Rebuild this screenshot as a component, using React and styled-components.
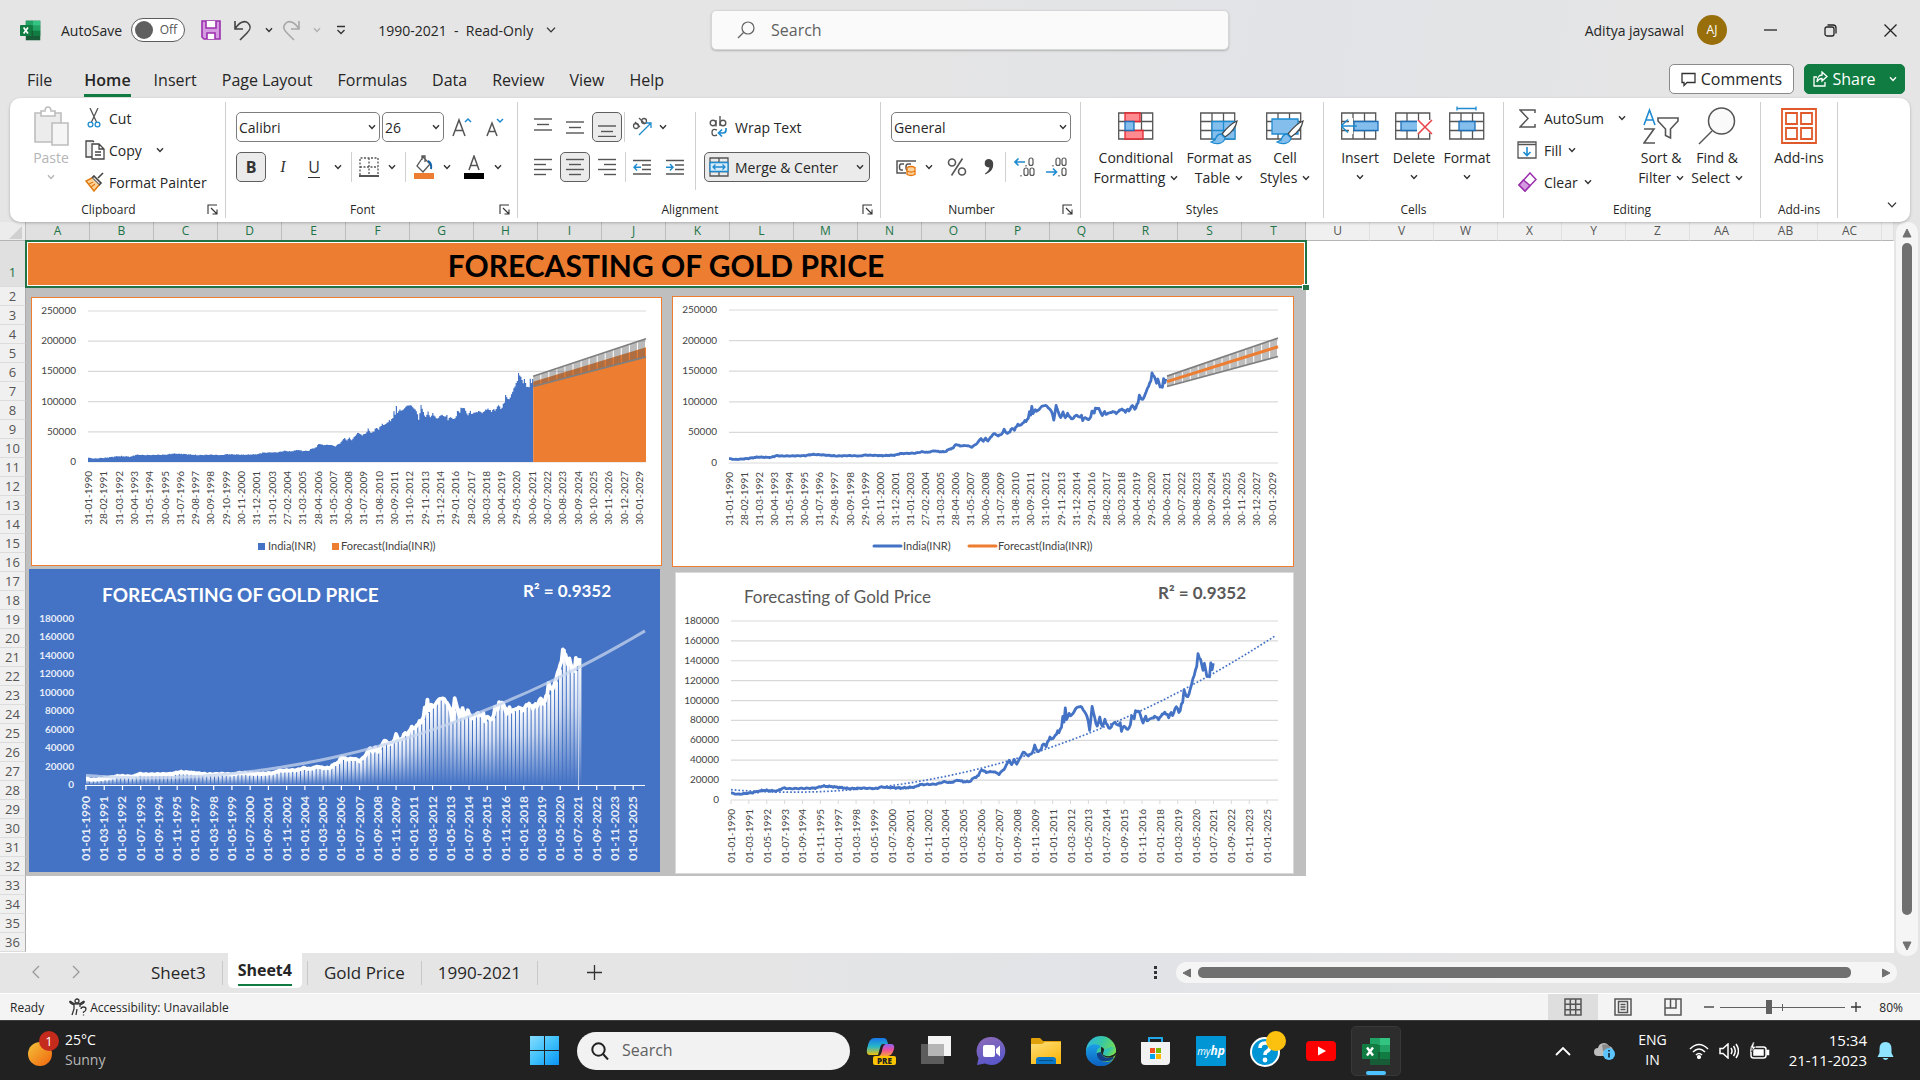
import React from "react";
import styled, { createGlobalStyle, css } from "styled-components";

const ui = '"Open Sans", "Noto Sans", sans-serif';
const cal = 'Lato, "Open Sans", sans-serif';
const GREEN = "#107c41";
const INK = "#262626";
const BLUE = "#4472c4";
const ORANGE = "#ed7d31";

const Global = createGlobalStyle`
  *, *::before, *::after { box-sizing: border-box; }
  html, body { margin: 0; height: 100%; overflow: hidden; }
  #root { height: 100%; }
  body { font-family: ${ui}; font-size: 14px; color: ${INK}; background: #e4e4e4; }
  button, input, select { font: inherit; color: inherit; margin: 0; }
  button { background: none; border: 0; padding: 0; cursor: pointer; }
  svg { display: block; flex: none; }
`;

const Screen = styled.div`
  height: 100vh;
  display: flex;
  flex-direction: column;
  background: linear-gradient(100deg, #e5e5e5 40%, #e2e3e7 62%, #e5e5e5 82%);
`;

/* ---------- title bar ---------- */
const TitleBar = styled.header`
  display: grid;
  grid-template-columns: minmax(0, 1fr) minmax(0, 518px) minmax(0, 691px);
  align-items: center;
  height: 60px;
`;
const TitleLeft = styled.div`
  display: flex;
  align-items: center;
  padding-left: 20px;
`;
const TitleRight = styled.div`
  display: flex;
  align-items: center;
  justify-content: flex-end;
  gap: 13px;
`;
const AutoSave = styled.label`
  display: flex;
  align-items: center;
  gap: 9px;
  margin: 0 16px 0 20px;
`;
const Toggle = styled.span`
  display: grid;
  width: 54px;
  height: 24px;
  border: 1px solid #5c5c5c;
  border-radius: 12px;
  background: #fff;
  font-size: 12px;
  line-height: 22px;
  > * { grid-area: 1 / 1; }
  > span { justify-self: end; padding-right: 7px; color: #555; pointer-events: none; }
  input {
    appearance: none;
    width: 18px;
    height: 18px;
    margin: 2px 3px;
    border-radius: 50%;
    background: #5f5f5f;
  }
`;
const QuickBtn = styled.button`
  display: grid;
  place-items: center;
  width: ${(p) => p.$w}px;
  height: 30px;
`;
const DocName = styled.button`
  display: flex;
  align-items: center;
  gap: 12px;
  margin-left: 13px;
  white-space: pre;
`;
const SearchBox = styled.label`
  display: flex;
  align-items: center;
  gap: 16px;
  height: 40px;
  padding: 0 25px;
  background: #fafafa;
  border: 1px solid #d6d6d6;
  border-radius: 5px;
  box-shadow: 0 1px 2px rgba(0, 0, 0, 0.22);
  input {
    flex: 1;
    min-width: 0;
    border: 0;
    background: none;
    outline: 0;
    padding: 0;
    font-size: 16px;
    line-height: 22px;
  }
  input::placeholder { color: #616161; opacity: 1; }
`;
const Avatar = styled.span`
  width: 30px;
  height: 30px;
  border-radius: 50%;
  background: #986f0b;
  color: #fff;
  font-size: 12px;
  line-height: 30px;
  text-align: center;
`;
const WinControls = styled.div`
  display: flex;
  button {
    display: grid;
    place-items: center;
    width: 60px;
    height: 40px;
  }
`;

/* ---------- menu tabs ---------- */
const MenuRow = styled.nav`
  display: flex;
  align-items: center;
  height: 38px;
  padding: 0 15px 0 27px;
`;
const MenuTab = styled.a`
  color: ${INK};
  text-decoration: none;
  font-size: 16px;
  line-height: 26px;
  padding: 5px 0 1px;
  margin-right: ${(p) => (p.$first ? 32 : p.$on ? 23 : 25)}px;
  border-bottom: 3px solid ${(p) => (p.$on ? GREEN : "transparent")};
  font-weight: ${(p) => (p.$on ? 600 : 400)};
`;
const MenuActions = styled.div`
  display: flex;
  gap: 10px;
  margin-left: auto;
`;
const ActionBtn = styled.button`
  display: flex;
  align-items: center;
  justify-content: center;
  gap: 5px;
  height: 30px;
  width: ${(p) => p.$w}px;
  font-size: 16px;
  border-radius: 5px;
  border: 1px solid ${(p) => (p.$solid ? GREEN : "#8a8a8a")};
  background: ${(p) => (p.$solid ? GREEN : "#fff")};
  color: ${(p) => (p.$solid ? "#fff" : INK)};
`;

/* ---------- ribbon ---------- */
const Ribbon = styled.section`
  position: relative;
  z-index: 2;
  display: flex;
  height: 124px;
  margin: 0 10px;
  background: #fff;
  border-radius: 10px;
  box-shadow: 0 1px 3px rgba(0, 0, 0, 0.25);
`;
const Group = styled.div`
  display: flex;
  flex-direction: column;
  width: ${(p) => p.$w}px;
  flex: none;
  border-right: 1px solid #cfcfcf;
  margin: 4px 0;
`;
const GroupBody = styled.div`
  display: flex;
  flex: 1;
  min-height: 0;
  padding: ${(p) => p.$pt || 0}px 0 0 ${(p) => p.$pl || 0}px;
`;
const GroupFoot = styled.div`
  display: grid;
  grid-template-columns: 1fr ${(p) => (p.$launch ? 18 : 0)}px;
  align-items: center;
  height: 18px;
  font-size: 12px;
  text-align: center;
`;
const Stack = styled.div`
  display: flex;
  flex-direction: column;
  gap: ${(p) => p.$gap || 0}px;
`;
const Row = styled.div`
  display: flex;
  align-items: center;
  height: 30px;
`;
const pressed = css`
  background: #ebebeb;
  border: 1px solid #5f5f5f;
  border-radius: 5px;
`;
const Tool = styled.button`
  display: flex;
  align-items: center;
  justify-content: center;
  width: ${(p) => p.$w}px;
  height: 30px;
  margin-left: ${(p) => p.$ml || 0}px;
  ${(p) => p.$on && pressed}
`;
const TextTool = styled.button`
  display: flex;
  align-items: center;
  gap: 6px;
  height: 30px;
  width: ${(p) => p.$w}px;
  padding: 0 4px;
  border: 1px solid transparent;
  white-space: nowrap;
  ${(p) => p.$on && pressed}
  > svg:last-child:not(:first-child) { margin-left: auto; margin-right: 1px; }
`;
const Divider = styled.i`
  width: 1px;
  height: ${(p) => p.$h || 30}px;
  margin: 0 ${(p) => p.$m}px;
  background: #d0d0d0;
`;
const Letter = styled.span`
  font-size: 16px;
  line-height: 20px;
  color: #333;
  font-weight: ${(p) => (p.$bold ? 700 : 400)};
  font-style: ${(p) => (p.$italic ? "italic" : "normal")};
  font-family: ${(p) => (p.$italic ? '"Liberation Serif", serif' : ui)};
  border-bottom: ${(p) => (p.$under ? "1px solid #333" : "0")};
`;
const Picker = styled.label`
  display: grid;
  align-items: center;
  width: ${(p) => p.$w}px;
  height: 30px;
  margin-right: 2px;
  border: 1px solid #7d7d7d;
  border-radius: 5px;
  background: #fff;
  > * { grid-area: 1 / 1; }
  > svg { justify-self: end; margin-right: 3px; pointer-events: none; }
  select {
    appearance: none;
    width: 100%;
    height: 28px;
    padding: 0 2px;
    border: 0;
    background: none;
    font-size: 14px;
  }
`;
const Big = styled.button`
  display: flex;
  flex-direction: column;
  align-items: center;
  width: ${(p) => p.$w}px;
  line-height: 20px;
  color: ${(p) => (p.$off ? "#b5b5b5" : INK)};
  > svg { margin: 4px 0 2px; }
  span { display: flex; align-items: center; gap: 5px; white-space: nowrap; }
  span + svg { margin: 6px 0; }
`;
const Small = styled.button`
  display: flex;
  align-items: center;
  gap: 6px;
  height: 32px;
  white-space: nowrap;
`;
const IconSlot = styled.span`
  display: grid;
  place-items: center;
  width: ${(p) => p.$w || 22}px;
`;
const Spacer = styled.i`
  width: ${(p) => p.$w || 0}px;
  flex: ${(p) => (p.$grow ? 1 : "none")};
`;
const Collapse = styled.button`
  margin: auto 12px 13px auto;
`;

/* ---------- sheet ---------- */
const Workspace = styled.main`
  display: flex;
  flex: 1;
  min-height: 0;
`;
const Sheet = styled.div`
  position: relative;
  flex: 1;
  overflow: hidden;
  background: #fff;
`;
const Cells = styled.table`
  width: 100%;
  table-layout: fixed;
  border-collapse: separate;
  border-spacing: 0;
  th, td { padding: 0; font-weight: 400; }
`;
const ColHead = styled.th`
  height: 19px;
  font-size: 12px;
  line-height: 18px;
  background: ${(p) => (p.$on ? "#e0e0e0" : "#f0f0f0")};
  color: ${(p) => (p.$on ? "#217346" : "#555")};
  border-right: 1px solid ${(p) => (p.$on ? "#bdbdbd" : "#e0e0e0")};
  border-bottom: 1px solid #b5b5b5;
`;
const RowHead = styled.th`
  height: ${(p) => (p.$tall ? 46 : 19)}px;
  font-size: 13px;
  line-height: 18px;
  vertical-align: bottom;
  background: ${(p) => (p.$tall ? "#e0e0e0" : "#f0f0f0")};
  color: ${(p) => (p.$tall ? "#217346" : "#555")};
  border-right: 1px solid #ababab;
  border-bottom: 1px solid #dcdcdc;
  &&& { padding-bottom: ${(p) => (p.$tall ? 5 : 0)}px; }
`;
const Corner = styled.th`
  background: #ececec;
  border-right: 1px solid #bdbdbd;
  border-bottom: 1px solid #b5b5b5;
  svg { margin: 2px 0 0 9px; }
`;
const TitleCell = styled.td`
  position: relative;
  background: ${ORANGE};
  color: #000;
  font-family: ${cal};
  font-size: 30px;
  font-weight: 700;
  line-height: 40px;
  text-align: center;
  box-shadow: inset 0 0 0 2px #fff;
  outline: 2px solid #217346;
  outline-offset: -1px;
  &&& { padding-top: 1px; font-weight: 700; }
  &::after {
    content: "";
    position: absolute;
    right: -3px;
    bottom: -3px;
    width: 7px;
    height: 6px;
    background: #217346;
    border: solid #fff;
    border-width: 1px 0 0 1px;
  }
`;
const GrayCell = styled.td`
  background: #bfbfbf;
`;
const ChartFrame = styled.figure`
  position: absolute;
  left: ${(p) => p.$x}px;
  top: ${(p) => p.$y}px;
  width: ${(p) => p.$w}px;
  height: ${(p) => p.$h}px;
  margin: 0;
  background: ${(p) => p.$bg};
  border: ${(p) => p.$border};
  svg { overflow: visible; }
  text { font-family: ${cal}; }
`;
const VScroll = styled.div`
  display: flex;
  flex-direction: column;
  align-items: center;
  width: 22px;
  margin: 0 2px -3px 2px;
  padding: 6px 0 5px;
  background: #f5f5f5;
  border-radius: 10px;
  i {
    width: 10px;
    flex: 1;
    margin: 5px 0 26px;
    border-radius: 5px;
    background: #707070;
  }
`;

/* ---------- sheet tabs ---------- */
const TabBar = styled.nav`
  display: flex;
  align-items: flex-start;
  height: 40px;
`;
const NavArrow = styled.button`
  display: grid;
  place-items: center;
  width: 40px;
  height: 38px;
`;
const SheetTab = styled.button`
  height: ${(p) => (p.$on ? 35 : 24)}px;
  margin: ${(p) => (p.$on ? "0 5px" : "8px 0 0")};
  padding: 0 ${(p) => (p.$on ? 10 : 16)}px;
  border-right: ${(p) => (p.$on ? "0" : "1px solid #c8c8c8")};
  border-left: ${(p) => (p.$lead ? "1px solid #c8c8c8" : "0")};
  background: ${(p) => (p.$on ? "#fff" : "none")};
  border-radius: ${(p) => (p.$on ? "0 0 5px 5px" : "0")};
  font-weight: ${(p) => (p.$on ? 700 : 400)};
  font-size: ${(p) => (p.$on ? 16 : 17)}px;
  line-height: ${(p) => (p.$on ? 28 : 24)}px;
  span {
    display: block;
    border-bottom: ${(p) => (p.$on ? `2px solid ${GREEN}` : "0")};
  }
`;
const HScroll = styled.div`
  display: flex;
  align-items: center;
  width: 721px;
  height: 21px;
  margin: 9px 23px 0 14px;
  padding: 0 6px;
  background: #f5f5f5;
  border-radius: 10px;
  i {
    height: 11px;
    flex: 1;
    margin: 0 30px 0 6px;
    border-radius: 5px;
    background: #707070;
  }
`;
const Kebab = styled.button`
  display: grid;
  place-items: center;
  width: 12px;
  height: 40px;
  margin-left: auto;
`;

/* ---------- status bar ---------- */
const StatusBar = styled.footer`
  display: flex;
  align-items: center;
  height: 27px;
  padding: 0 17px 0 10px;
  background: #f4f4f4;
  border-top: 1px solid #fff;
  font-size: 12px;
`;
const Access = styled.button`
  display: flex;
  align-items: center;
  gap: 3px;
  margin-left: 25px;
`;
const ViewBtn = styled.button`
  display: grid;
  place-items: center;
  width: 50px;
  height: 26px;
  background: ${(p) => (p.$on ? "#dedede" : "none")};
`;
const Zoom = styled.div`
  display: flex;
  align-items: center;
  gap: 6px;
  margin-left: 6px;
  output { width: 28px; margin-left: 8px; text-align: right; }
  input {
    appearance: none;
    width: 125px;
    height: 16px;
    background: linear-gradient(#616161, #616161) 50% 50% / 100% 1px no-repeat,
      linear-gradient(#616161, #616161) 50% 50% / 1px 7px no-repeat;
  }
  input::-webkit-slider-thumb {
    appearance: none;
    width: 6px;
    height: 14px;
    background: #616161;
  }
`;

/* ---------- taskbar ---------- */
const TaskBar = styled.footer`
  display: grid;
  grid-template-columns: 1fr auto 1fr;
  align-items: center;
  height: 60px;
  background: #212121;
  border-top: 1px solid #3a3f3d;
  color: #fff;
  font-size: 14px;
  line-height: 20px;
`;
const Weather = styled.button`
  display: flex;
  align-items: center;
  gap: 6px;
  padding: 0 0 2px 25px;
  text-align: left;
  color: #fff;
  small { display: block; font-size: 14px; color: #b8b8b8; }
`;
const Dock = styled.div`
  display: flex;
  align-items: center;
  padding-left: 11px;
`;
const DockBtn = styled.button`
  display: grid;
  place-items: center;
  justify-items: ${(p) => (p.$start ? "start" : "center")};
  width: ${(p) => p.$w || 55}px;
  height: 50px;
`;
const ActiveApp = styled.button`
  display: grid;
  place-items: center;
  align-content: end;
  gap: 5px;
  width: 50px;
  height: 50px;
  margin-left: 3px;
  background: #2d2d2d;
  border: 1px solid #383838;
  border-radius: 5px;
  &::after { content: ""; width: 20px; height: 4px; border-radius: 2px; background: #4cc2ff; }
`;
const TaskSearch = styled.label`
  display: flex;
  align-items: center;
  gap: 13px;
  width: 273px;
  height: 38px;
  margin: 0 3px 0 0;
  padding: 0 14px;
  border-radius: 19px;
  background: #f2f2f2;
  input {
    flex: 1;
    min-width: 0;
    padding: 0 0 1px;
    border: 0;
    outline: 0;
    background: none;
    font-size: 16px;
    line-height: 22px;
    color: #333;
  }
  input::placeholder { color: #616161; opacity: 1; }
`;
const Tray = styled.div`
  display: flex;
  align-items: center;
  justify-content: flex-end;
  gap: 10px;
  padding-right: 26px;
`;
const TrayText = styled.button`
  color: #fff;
  line-height: 20px;
  font-size: ${(p) => p.$size || 14}px;
  text-align: ${(p) => p.$align};
  margin: 0 ${(p) => p.$mr}px 2px ${(p) => p.$ml}px;
  white-space: pre-line;
`;

/* ---------- icons ---------- */
const G = "#555";
const B = "#1e8bd0";
function Ic({ w = 20, h = 20, children, c = G, s = 1.3, vb }) {
  return (
    <svg width={w} height={h} viewBox={vb || `0 0 ${w} ${h}`} fill="none" stroke={c} strokeWidth={s} aria-hidden="true">
      {children}
    </svg>
  );
}
const Chev = ({ c = "#333", w = 8, s = 1.4 }) => (
  <Ic w={w} h={w / 2 + 2} vb="0 0 8 6" c={c} s={s}>
    <path d="M1 1.2 4 4.4 7 1.2" />
  </Ic>
);
const Launch = () => (
  <Ic w={11} h={11} c="#333" s={1.1}>
    <path d="M1 10V1h9M4 4l6 6M10 5.5V10H5.5" />
  </Ic>
);
const ExcelLogo = ({ w = 20 }) => (
  <svg width={w} height={w} viewBox="0 0 29 29" aria-hidden="true">
    <path d="M8 1h20v27H8z" fill="#185c37" />
    <path d="M8 1h10v7H8z" fill="#21a366" />
    <path d="M18 1h10v7H18z" fill="#33c481" />
    <path d="M8 8h10v7H8z" fill="#107c41" />
    <path d="M18 8h10v7H18z" fill="#21a366" />
    <path d="M18 15h10v7H18z" fill="#107c41" />
    <rect x="0" y="7" width="16" height="15" rx="1" fill="#107c41" />
    <path d="M5 10.5 11 18.500M11 10.500 5 18.500" stroke="#fff" strokeWidth="2.400" />
  </svg>
);
const lines = (rows) => rows.map(([y, a, b], i) => <path key={i} d={`M${a} ${y}H${b}`} />);
const Lines = ({ rows }) => <Ic w={18} h={20} s={1.4}>{lines(rows)}</Ic>;
const Indent = ({ out }) => (
  <Ic w={19} h={20} s={1.4}>
    <path d="M0 3.500H18M9 8H18M9 12.500H18M0 17H18" />
    <path stroke={B} d={out ? "M1 10.200H8M4 7 1 10.200 4 13.500" : "M0 10.200H7M4 7 7 10.200 4 13.500"} />
  </Ic>
);
const GridIc = ({ w = 36, children }) => (
  <Ic w={w} h={40} vb={`0 0 ${w} 40`}>
    <path d="M.7 7h34v26H.7zM.7 15.500h34M.7 24.500h34M12 7v26M23.500 7v26" />
    {children}
  </Ic>
);
const Brush = ({ x = 0 }) => (
  <g transform={`translate(${x} 0)`}>
    <path d="M36 15c-1 6-6 12-12 16l-3-3C25 23 31 17 36 15z" fill="#fff" stroke="#444" />
    <path d="M20 28c-4 0-5 3-6 6l-4 2c5 3 13 2 14-4z" fill="#83beec" stroke={B} />
  </g>
);

/* ---------- chart data ---------- */
const KEYS = [0,7,5,5.7,15,7,25,9.7,36,9,41,12,46,11.4,66,12,72,14,80,13.4,93,11.4,104,12,114,11.4,117,13,134,12,144,13,148,15.4,161,16,167,18.4,172,17.4,178,20,182,18.4,187,18.4,190,22,194,24.5,196,30.5,200,28,206,28.5,210,26,214,31,218,40,220,35.5,222,40.5,224,36,229,48.3,233,44.6,236,47,238,54.6,240,48.6,243,50.6,245,57.3,247,54,250,63.4,252,60.7,256,69,257,67.4,259,74,260,84,261,78,262,92,263,81.5,265,87,266,84,270,91,272,94,274,94,278,87.5,280,79,281,70,283,93.5,285,82.5,287,74,289,82.5,291,74,293,80,297,71,300,78.5,303,75,305,77.5,306,69,308,75,311,70,313,76,314,85,316,81.5,317,90,320,88.5,322,81,323,77.5,325,84,326,80,329,81.5,332,84,335,81.5,340,88.5,343,83,345,89,346,84,349,95,351,88,352,89,353,97.5,354,98,355,111,356,106,358,104,360,111,362,122,365,134,366,147,368,141,370,130,371,138,373,124,375,124,376,138.5,377,131,378,137];
const PRICES = (() => {
  const out = [];
  for (let m = 0, k = 0; m <= 378; m++) {
    while (k + 2 < KEYS.length - 2 && KEYS[k + 2] <= m) k += 2;
    const [x0, y0, x1, y1] = KEYS.slice(k, k + 4);
    const wave = Math.sin(m * 2.3) * Math.cos(m * 0.9);
    out.push(y0 + ((y1 - y0) * (m - x0)) / (x1 - x0) + wave * (y0 < 50 ? 0.7 : 1.2));
  }
  return out;
})();
const TREND = (m) => 10.4 - 0.1053 * m + 0.001097 * m * m;
const FORECAST_DATES = "31-01-1990 28-02-1991 31-03-1992 30-04-1993 31-05-1994 30-06-1995 31-07-1996 29-08-1997 30-09-1998 29-10-1999 30-11-2000 31-12-2001 31-01-2003 27-02-2004 31-03-2005 28-04-2006 31-05-2007 30-06-2008 31-07-2009 31-08-2010 30-09-2011 31-10-2012 29-11-2013 31-12-2014 29-01-2016 28-02-2017 30-03-2018 30-04-2019 29-05-2020 30-06-2021 30-07-2022 30-08-2023 30-09-2024 30-10-2025 30-11-2026 30-12-2027 30-01-2029".split(" ");
const TREND_DATES = Array.from({ length: 31 }, (_, i) => {
  const m = i * 14;
  return `01-${String((m % 12) + 1).padStart(2, "0")}-${1990 + Math.floor(m / 12)}`;
});
const poly = (pts) => "M" + pts.map(([x, y]) => `${x.toFixed(1)} ${y.toFixed(1)}`).join("L");

function Axes({ p, step, max, dates, gap, grid = true, ink = "#444", size = 10, weight = 400, dateTop }) {
  const ticks = [];
  for (let v = 0; v <= max; v += step) ticks.push(v);
  return (
    <g fill={ink} fontSize={10} fontWeight={weight}>
      {ticks.map((v) => (
        <g key={v}>
          {grid && <path d={`M${p.l} ${p.y(v)}H${p.r}`} stroke="#d9d9d9" strokeWidth="1.200" />}
          <text x={p.l - 12} y={p.y(v) + 3} textAnchor="end">{v * 1000}</text>
        </g>
      ))}
      {dates.map((d, i) => (
        <text key={d} fontSize={size} textAnchor="end" transform={`translate(${p.l + 4 + i * gap} ${dateTop}) rotate(-90)`}>{d}</text>
      ))}
    </g>
  );
}

function Band({ p, px, fill }) {
  const a = p.l + 379 * px;
  const n = 14;
  const w = (p.r - a) / n;
  const up = (t) => p.y(142 + 62 * t);
  const lo = (t) => p.y(125 + 49 * t);
  return (
    <g>
      {Array.from({ length: n }, (_, i) => (
        <path key={i} fill={fill} d={poly([[a + i * w, up(i / n)], [a + i * w + w - 1, up((i + 1) / n)], [a + i * w + w - 1, lo((i + 1) / n)], [a + i * w, lo(i / n)]]) + "Z"} />
      ))}
      <path d={`M${a} ${up(0)}L${p.r} ${up(1)}M${a} ${lo(0)}L${p.r} ${lo(1)}`} stroke="#7f7f7f" strokeWidth="1.700" />
    </g>
  );
}

function AreaForecast() {
  const p = { l: 56, r: 614, y: (v) => 164 - v * 0.604 };
  const px = 558 / 475;
  let d = `M${p.l} ${p.y(0)}`;
  PRICES.forEach((v, i) => { d += `V${p.y(v).toFixed(1)}H${(p.l + (i + 1) * px).toFixed(1)}`; });
  const fx = p.l + 379 * px;
  return (
    <ChartFrame $x={31} $y={75} $w={631} $h={269} $bg="#fff" $border={`1px solid ${ORANGE}`}>
      <svg width="629" height="267" role="img" aria-label="Area forecast of India(INR)">
        <Axes p={p} step={50} max={250} dates={FORECAST_DATES} gap={15.3} dateTop={173} />
        <path d={`${d}V${p.y(0)}Z`} fill={BLUE} />
        <path d={poly([[fx, p.y(0)], [fx, p.y(133)], [p.r, p.y(190)], [p.r, p.y(0)]]) + "Z"} fill={ORANGE} />
        <Band p={p} px={px} fill="rgba(90,90,90,.42)" />
        <g fontSize="11" fill="#444">
          <path d="M226 245h7v7h-7z" fill={BLUE} />
          <text x="236" y="252">India(INR)</text>
          <path d="M300 245h7v7h-7z" fill={ORANGE} />
          <text x="309" y="252">Forecast(India(INR))</text>
        </g>
      </svg>
    </ChartFrame>
  );
}
function LineForecast() {
  const p = { l: 56, r: 605, y: (v) => 166 - v * 0.612 };
  const px = 549 / 475;
  return (
    <ChartFrame $x={672} $y={74} $w={622} $h={271} $bg="#fff" $border={`1px solid ${ORANGE}`}>
      <svg width="620" height="269" role="img" aria-label="Line forecast of India(INR)" fill="none">
        <Axes p={p} step={50} max={250} dates={FORECAST_DATES} gap={15.07} dateTop={175} />
        <path d={poly(PRICES.map((v, i) => [p.l + i * px, p.y(v)]))} stroke={BLUE} strokeWidth="2.800" strokeLinejoin="round" />
        <Band p={p} px={px} fill="#bdbdbd" />
        <path d={`M${p.l + 379 * px} ${p.y(133)}L${p.r} ${p.y(190)}`} stroke={ORANGE} strokeWidth="3" />
        <path d="M201 249h27" stroke={BLUE} strokeWidth="3" strokeLinecap="round" />
        <path d="M296 249h27" stroke={ORANGE} strokeWidth="3" strokeLinecap="round" />
        <g fontSize="11" fill="#444">
          <text x="230" y="253">India(INR)</text>
          <text x="325" y="253">Forecast(India(INR))</text>
        </g>
      </svg>
    </ChartFrame>
  );
}
function BlueTrend() {
  const p = { l: 57, r: 616, y: (v) => 216 - v * 0.922 };
  const px = 1.303;
  const pts = PRICES.map((v, i) => [p.l + i * px, p.y(v)]);
  const end = pts[pts.length - 1][0];
  return (
    <ChartFrame $x={29} $y={347} $w={631} $h={303} $bg={BLUE} $border="0">
      <svg width="631" height="303" role="img" aria-label="Gold price with trend" fill="none">
        <defs>
          <linearGradient id="fade" x1="0" y1="0" x2="0" y2="1">
            <stop offset="0" stopColor="#fff" />
            <stop offset=".35" stopColor="#fff" stopOpacity=".75" />
            <stop offset="1" stopColor="#fff" stopOpacity="0" />
          </linearGradient>
        </defs>
        <Axes p={p} step={20} max={180} dates={TREND_DATES} gap={18.24} grid={false} ink="#e6edf8" size={12} weight={700} dateTop={227} />
        {pts.map(([x, y], i) => i % 3 === 0 && (
          <rect key={i} x={x} y={y} width="2.900" height={216 - y} fill="url(#fade)" />
        ))}
        <path d={poly(pts)} stroke="#fff" strokeWidth="3.800" strokeLinejoin="round" />
        <path d={`M${end} ${pts[378][1]}V216`} stroke="#fff" strokeOpacity=".6" />
        <path d={poly(Array.from({ length: 44 }, (_, i) => [p.l + (i * 429 / 43) * px, p.y(TREND(i * 429 / 43))]))} stroke="#c7d5ed" strokeOpacity=".75" strokeWidth="3" />
        <path d={`M${p.l - 1} 216.500H${p.r}` + TREND_DATES.map((_, i) => `M${p.l + i * 18.24} 216v5`).join("")} stroke="#fff" strokeWidth="1.200" />
        <g fill="#fff" fontWeight="700">
          <text x="73" y="33" fontSize="19">FORECASTING OF GOLD PRICE</text>
          <text x="494" y="28" fontSize="17">R² = 0.9352</text>
        </g>
      </svg>
    </ChartFrame>
  );
}
function DottedTrend() {
  const p = { l: 55, r: 602, y: (v) => 227 - v * 0.9945 };
  const px = 1.276;
  return (
    <ChartFrame $x={675} $y={350} $w={619} $h={302} $bg="#fff" $border="1px solid #d9d9d9">
      <svg width="617" height="300" role="img" aria-label="Gold price with dotted trend" fill="none">
        <Axes p={p} step={20} max={180} dates={TREND_DATES} gap={17.87} dateTop={236} />
        <path d={TREND_DATES.map((_, i) => `M${p.l + i * 17.87} 227v4`).join("")} stroke="#d9d9d9" />
        <path d={poly(Array.from({ length: 44 }, (_, i) => [p.l + (i * 426 / 43) * px, p.y(TREND(i * 426 / 43))]))} stroke={BLUE} strokeWidth="1.700" strokeDasharray="1.700 2" />
        <path d={poly(PRICES.map((v, i) => [p.l + i * px, p.y(v)]))} stroke={BLUE} strokeWidth="2.800" strokeLinejoin="round" />
        <g fill="#595959">
          <text x="68" y="30" fontSize="17">Forecasting of Gold Price</text>
          <text x="482" y="26" fontSize="17" fontWeight="700">R² = 0.9352</text>
        </g>
      </svg>
    </ChartFrame>
  );
}

const COLS = [..."ABCDEFGHIJKLMNOPQRSTUVWXYZ", "AA", "AB", "AC"];

function Grid() {
  return (
    <Sheet>
      <Cells aria-label="Sheet4">
        <colgroup>
          <col style={{ width: 26 }} />
          {COLS.map((c) => <col key={c} style={{ width: 64 }} />)}
          <col />
        </colgroup>
        <thead>
          <tr>
            <Corner><Ic w={13} h={13} s={0}><path d="M13 0v13H0z" fill="#d0d0d0" /></Ic></Corner>
            {COLS.map((c, i) => <ColHead key={c} scope="col" $on={i < 20}>{c}</ColHead>)}
            <ColHead />
          </tr>
        </thead>
        <tbody>
          {Array.from({ length: 36 }, (_, i) => i + 1).map((r) => (
            <tr key={r}>
              <RowHead scope="row" $tall={r === 1}>{r}</RowHead>
              {r === 1 ? <TitleCell colSpan={20}>FORECASTING OF GOLD PRICE</TitleCell>
                : r <= 32 ? <GrayCell colSpan={20} /> : <td colSpan={20} />}
              <td colSpan={10} />
            </tr>
          ))}
        </tbody>
      </Cells>
      <AreaForecast />
      <LineForecast />
      <BlueTrend />
      <DottedTrend />
    </Sheet>
  );
}

function Title() {
  return (
    <TitleBar>
      <TitleLeft>
        <ExcelLogo w={21} />
        <AutoSave>AutoSave<Toggle><input type="checkbox" /><span>Off</span></Toggle></AutoSave>
        <QuickBtn $w={20} aria-label="Save">
          <Ic c="#9b2fae" s={1.6}>
            <path d="M1 1h18v18H3l-2-2z" fill="#d59be0" /><path d="M5 1v7h10V1M6 19v-6h8v6" fill="#fff" />
          </Ic>
        </QuickBtn>
        <QuickBtn $w={44} aria-label="Undo">
          <Ic w={20} h={22} c="#444" s={1.6}><path d="M2 2v8h8M2 10C6 3 12 1 15 4c4 4 2 7-1 10l-7 7" /></Ic>
        </QuickBtn>
        <QuickBtn $w={4} aria-label="Undo history"><Chev /></QuickBtn>
        <QuickBtn $w={44} aria-label="Redo">
          <Ic w={20} h={22} c="#a8a8a8" s={1.6}><path d="M18 2v8h-8M18 10C14 3 8 1 5 4c-4 4-2 7 1 10l7 7" /></Ic>
        </QuickBtn>
        <QuickBtn $w={4} aria-label="Redo history"><Chev c="#b0b0b0" /></QuickBtn>
        <QuickBtn $w={48} aria-label="Customize toolbar">
          <Ic w={10} h={10} c="#333"><path d="M1 1.500h8M1.500 5 5 8.500 8.500 5" /></Ic>
        </QuickBtn>
        <DocName>{"1990-2021  -  Read-Only"}<Chev w={12} s={1} /></DocName>
      </TitleLeft>
      <SearchBox>
        <Ic w={18} h={18} c="#616161" s={1.2}><circle cx="11" cy="7" r="6" /><path d="M6.500 11.500 1 17" /></Ic>
        <input type="search" placeholder="Search" aria-label="Search" />
      </SearchBox>
      <TitleRight>
        <span>Aditya jaysawal</span>
        <Avatar>AJ</Avatar>
        <WinControls>
          <button aria-label="Minimize"><Ic w={13} h={12} c="#222"><path d="M0 6h13" /></Ic></button>
          <button aria-label="Restore"><Ic w={13} h={13} c="#222"><rect x="1" y="3" width="9" height="9" rx="2" /><path d="M3.500 1H9q3 0 3 3v5.500" /></Ic></button>
          <button aria-label="Close"><Ic w={13} h={13} c="#222"><path d="M.5.500l12 12M12.500.500l-12 12" /></Ic></button>
        </WinControls>
      </TitleRight>
    </TitleBar>
  );
}

function Menu() {
  return (
    <MenuRow>
      {["File", "Home", "Insert", "Page Layout", "Formulas", "Data", "Review", "View", "Help"].map((t) => (
        <MenuTab key={t} href="#" $first={t === "File"} $on={t === "Home"}>{t}</MenuTab>
      ))}
      <MenuActions>
        <ActionBtn $w={125}>
          <Ic w={15} h={15} c="#333"><path d="M1 1.500h13v9H6l-3 3v-3H1z" /></Ic>Comments
        </ActionBtn>
        <ActionBtn $w={101} $solid>
          <Ic w={15} h={16} c="#fff"><path d="M4 6H1v9h11v-4M9 1l5 4.500L9 10V7.500C6 7.500 5 9 4 11c0-4 2-7 5-7z" /></Ic>Share
          <Spacer $w={3} /><Chev c="#fff" />
        </ActionBtn>
      </MenuActions>
    </MenuRow>
  );
}

const Foot = ({ children, launch }) => (
  <GroupFoot $launch={launch}><span>{children}</span>{launch && <button aria-label={`${children} settings`}><Launch /></button>}</GroupFoot>
);
const Drop = ({ w, label }) => <Tool $w={w} aria-label={label}><Chev /></Tool>;

function RibbonBar() {
  return (
    <Ribbon>
      <Group $w={216}>
        <GroupBody>
          <Spacer $w={16} />
          <Big $w={50} $off>
            <Ic w={36} h={40} c="#bdbdbd" s={1.6}>
              <path d="M2 7h26v29H2z" fill="#ececec" /><path d="M8 10V5h4q0-4 3-4t3 4h4v5z" fill="#fff" /><path d="M19 17h16v22H19z" fill="#f5f5f5" />
            </Ic>
            <span>Paste</span><Chev c="#b5b5b5" />
          </Big>
          <Spacer $w={9} />
          <Stack>
            <Small>
              <IconSlot $w={18}><Ic w={14} h={20} c="#555"><path d="M3 0 9.500 14M11 0 4.500 14" /><circle cx="3.500" cy="16.500" r="2.400" stroke={B} /><circle cx="10.500" cy="16.500" r="2.400" stroke={B} /></Ic></IconSlot>
              Cut
            </Small>
            <Small>
              <IconSlot $w={18}><Ic w={20} h={20} c="#444"><path d="M7 17H1V1h7l1 1" fill="#eee" /><path d="M7 4h7l5 5v10H7zM14 4v5h5M10 12h6M10 15h6" /></Ic></IconSlot>
              Copy<Spacer $w={2} /><Chev />
            </Small>
            <Small>
              <IconSlot $w={18}><Ic w={20} h={20} c="#444"><path d="M18 1l-5 5M9 4l7 7-2 2-7-7z" fill="#ddd" strokeWidth="1.600" /><path d="M7 6 1 9l8 10 5-6" fill="#fbd39b" stroke="#e07b12" strokeWidth="1.500" /><path d="M4 12l4-2M6 15l4-3" stroke="#e07b12" /></Ic></IconSlot>
              Format Painter
            </Small>
          </Stack>
        </GroupBody>
        <Foot launch>Clipboard</Foot>
      </Group>

      <Group $w={292}>
        <GroupBody $pt={10} $pl={10}>
          <Stack $gap={10}>
            <Row>
              <Picker $w={144}><select aria-label="Font name"><option>Calibri</option></select><Chev /></Picker>
              <Picker $w={62}><select aria-label="Font size"><option>26</option></select><Chev /></Picker>
              <Tool $w={32} aria-label="Grow font"><Ic w={20} h={22} s={1.5}><path d="M1 20 7 4l6 16M3 14.500h8" /><path d="M13 6l3-3 3 3" stroke={B} /></Ic></Tool>
              <Tool $w={34} aria-label="Shrink font"><Ic w={18} h={22} s={1.5}><path d="M1 20 6 7l5 13M3 15.500h6" /><path d="M11 3l3 3 3-3" stroke={B} /></Ic></Tool>
            </Row>
            <Row>
              <Tool $w={30} $on aria-label="Bold"><Letter $bold>B</Letter></Tool>
              <Tool $w={34} aria-label="Italic"><Letter $italic>I</Letter></Tool>
              <Tool $w={28} aria-label="Underline"><Letter $under>U</Letter></Tool>
              <Drop w={20} label="Underline style" />
              <Divider $m={3} />
              <Tool $w={28} aria-label="Borders"><Ic><g strokeDasharray="2 1.500"><path d="M1 18V1h18v17M10 1v17M1 10h18" /></g><path d="M0 19h20" strokeWidth="2" /></Ic></Tool>
              <Drop w={18} label="Border style" />
              <Divider $m={4} />
              <Tool $w={28} aria-label="Fill color"><Ic w={20} h={24}><path d="M9 2 3 11l6 6 7-8zM8 5V1h3v6" /><path d="M14 6q4 2 3 8" stroke="#1664a8" strokeWidth="2" /><path d="M0 18h20v6H0z" fill={ORANGE} stroke="none" /></Ic></Tool>
              <Drop w={18} label="Fill colors" />
              <Tool $w={36} aria-label="Font color"><Ic w={20} h={24} s={1.5}><path d="M5 15 10 1l5 14M6.500 10.500h7" /><path d="M0 18h20v6H0z" fill="#000" stroke="none" /></Ic></Tool>
              <Drop w={12} label="Font colors" />
            </Row>
          </Stack>
        </GroupBody>
        <Foot launch>Font</Foot>
      </Group>

      <Group $w={363}>
        <GroupBody $pt={10} $pl={10}>
          <Stack $gap={10}>
            <Row>
              <Tool $w={30} aria-label="Top align"><Lines rows={[[2, 0, 18], [7.5, 3, 15], [13, 0, 18]]} /></Tool>
              <Tool $w={34} aria-label="Middle align"><Lines rows={[[5, 0, 18], [10.5, 3, 15], [16, 0, 18]]} /></Tool>
              <Tool $w={30} $on aria-label="Bottom align"><Lines rows={[[9, 0, 18], [14.5, 3, 15], [19.5, 0, 18]]} /></Tool>
              <Divider $m={2} />
              <Tool $w={30} aria-label="Orientation"><Ic w={21} h={20}><circle cx="4" cy="9" r="2.500" /><path d="M3 5l5 5M7 1l6 6" /><circle cx="12" cy="4" r="2.500" /><path d="M7 18 19 6M14 6h5v5" stroke={B} /></Ic></Tool>
              <Drop w={12} label="Orientation options" />
            </Row>
            <Row>
              <Tool $w={30} aria-label="Align left"><Lines rows={[[2.5, 0, 18], [7.5, 0, 12], [12.5, 0, 18], [17.5, 0, 12]]} /></Tool>
              <Tool $w={30} $ml={2} $on aria-label="Align center"><Lines rows={[[2.5, 0, 18], [7.5, 3, 15], [12.5, 0, 18], [17.5, 3, 15]]} /></Tool>
              <Tool $w={34} aria-label="Align right"><Lines rows={[[2.5, 0, 18], [7.5, 6, 18], [12.5, 0, 18], [17.5, 6, 18]]} /></Tool>
              <Divider $m={1} />
              <Tool $w={30} aria-label="Decrease indent"><Indent out /></Tool>
              <Tool $w={36} aria-label="Increase indent"><Indent /></Tool>
            </Row>
          </Stack>
          <Divider $h={78} $m={2} />
          <Spacer $w={6} />
          <Stack $gap={10}>
            <TextTool $w={166}>
              <Ic w={20} h={22} s={1.4}>
                <circle cx="4" cy="7" r="2.800" /><path d="M7 4v6.500M11 0v10" /><circle cx="14" cy="7" r="2.800" /><path d="M8 14q-5-2-5 2.500T8 19" />
                <path d="M17 12v2q0 3-3 3h-4M13 13.500 9.500 17l3.500 3.500" stroke={B} strokeWidth="1.700" />
              </Ic>
              Wrap Text
            </TextTool>
            <TextTool $w={166} $on>
              <Ic w={20} h={20}>
                <path d="M1 1h18v18H1zM1 5.500h18M1 14.500h18M10 1v4M10 15v4" /><path d="M1 5.500h18v9H1z" fill="#d7ebfa" stroke={B} /><path d="M4 10h12M6.500 7.500 4 10l2.500 2.500M13.500 7.500 16 10l-2.500 2.500" stroke={B} />
              </Ic>
              Merge &amp; Center<Chev />
            </TextTool>
          </Stack>
        </GroupBody>
        <Foot launch>Alignment</Foot>
      </Group>

      <Group $w={200}>
        <GroupBody $pt={10} $pl={10}>
          <Stack $gap={10}>
            <Row><Picker $w={180}><select aria-label="Number format"><option>General</option></select><Chev /></Picker></Row>
            <Row>
              <Tool $w={30} aria-label="Accounting format"><Ic><path d="M20 4H1v12h9M8 7H5q-1.500 0-1.500 3T5 13h2M15 7h-3q-2 0-2 3t1 3" strokeWidth="1.500" /><path d="M11 10.500q4-2 8 0v7q-4 2-8 0zM11 14q4 2 8 0" fill="#fbd39b" stroke="#e8740c" /></Ic></Tool>
              <Drop w={16} label="Currencies" />
              <Tool $w={40} aria-label="Percent"><Ic s={1.6}><circle cx="5" cy="5.500" r="3.500" /><circle cx="15" cy="14.500" r="3.500" /><path d="M15.500 1.500 4.500 18.500" /></Ic></Tool>
              <Tool $w={24} aria-label="Comma style"><Ic w={10} h={18} s={0}><path d="M5 1a4.200 4.200 0 1 1-1 8.300A4.200 4.200 0 0 1 5 1M9.200 5Q10 13 1.500 16.500l-.5-1Q6 12 6 7z" fill="#444" /></Ic></Tool>
              <Divider $m={4} />
              <Tool $w={28} aria-label="Increase decimal"><Decimal /></Tool>
              <Tool $w={36} aria-label="Decrease decimal"><Decimal flip /></Tool>
            </Row>
          </Stack>
        </GroupBody>
        <Foot launch>Number</Foot>
      </Group>

      <Group $w={243}>
        <GroupBody $pl={9}>
          <Big $w={92}>
            <GridIc><g fill="#ff8a8f" stroke="#e3262e"><path d="M7 7h15v8.500H7zM7 24.500h18V33H7z" /><path d="M7 15.500h9v9H7z" fill="#83beec" stroke="#1e6fb8" /></g></GridIc>
            <span>Conditional</span><span>Formatting<Chev /></span>
          </Big>
          <Big $w={74}>
            <GridIc w={38}><path d="M12 15.500h23V33H12z" fill="#83beec" stroke={B} /><path d="M12 24.500h22M23.500 15v18" stroke={B} /><Brush x={1} /></GridIc>
            <span>Format as</span><span>Table<Chev /></span>
          </Big>
          <Big $w={58}>
            <GridIc w={38}><path d="M6 13h26v15H6z" fill="#83beec" stroke={B} /><Brush x={1} /></GridIc>
            <span>Cell</span><span>Styles<Chev /></span>
          </Big>
        </GroupBody>
        <Foot>Styles</Foot>
      </Group>

      <Group $w={180}>
        <GroupBody $pl={12}>
          <Big $w={48}>
            <GridIc w={38}><path d="M13 15.500h24v9H13z" fill="#83beec" stroke="#1e6fb8" /><path d="M8 12h4v16H8z" fill="#fff" stroke="none" /><path d="M16 20H0M7 13.500 0 20l7 6.500" stroke={B} strokeWidth="1.600" /></GridIc>
            <span>Insert</span><Chev />
          </Big>
          <Big $w={60}>
            <GridIc w={38}><path d="M6 15.500h17v9H6z" fill="#83beec" stroke="#1e6fb8" /><path d="M22 14h16v13H22z" fill="#fff" stroke="none" /><path d="M23 14l14 14M37 14 23 28" stroke="#e8474c" strokeWidth="1.600" /></GridIc>
            <span>Delete</span><Chev />
          </Big>
          <Big $w={46}>
            <GridIc w={36}><path d="M10 15.500h16v9H10z" fill="#83beec" stroke="#1e6fb8" /><path d="M8 2.500h19M8 .5v4M27 .5v4" stroke={B} /></GridIc>
            <span>Format</span><Chev />
          </Big>
        </GroupBody>
        <Foot>Cells</Foot>
      </Group>

      <Group $w={257}>
        <GroupBody $pl={12}>
          <Stack>
            <Small>
              <IconSlot><Ic w={17} h={19} s={1.5}><path d="M16 4V1H1l8 8.500L1 18h15v-3" /></Ic></IconSlot>AutoSum<Spacer $w={2} /><Chev />
            </Small>
            <Small><IconSlot><Ic w={20} h={18}><path d="M1 1h18v16H1zM1 3.500h18" /><path d="M10 6v8M6.500 11l3.500 3.500 3.500-3.500" stroke={B} strokeWidth="1.600" /></Ic></IconSlot>Fill<Chev /></Small>
            <Small><IconSlot><Ic w={19} h={20} c="#9b2fae" s={1.5}><path d="M12 1l6 6.500L7 19l-6-6z" /><path d="M5.500 8 1 13l6 6 5-5.500z" fill="#d59be0" /></Ic></IconSlot>Clear<Chev /></Small>
          </Stack>
          <Spacer $w={8} />
          <Big $w={54}>
            <Ic w={36} h={40} s={1.6}><path d="M1 19 6.500 4 12 19M3 14h7" stroke={B} /><path d="M1 23h10L1 37h11" /><path d="M15 12h20v3l-7.500 8v9l-5-2.500V23L15 15z" /></Ic>
            <span>Sort &amp;</span><span>Filter<Chev /></span>
          </Big>
          <Big $w={58}>
            <Ic w={38} h={40} s={1.5}><circle cx="23.500" cy="15" r="13" fill="#fafafa" /><path d="M14 25 1 38" /></Ic>
            <span>Find &amp;</span><span>Select<Chev /></span>
          </Big>
        </GroupBody>
        <Foot>Editing</Foot>
      </Group>

      <Group $w={77}>
        <GroupBody>
          <Big $w={77}>
            <Ic w={36} h={40} c="#e0592a" s={1.8}><path d="M1 3h34v34H1zM5 7h11v11H5zM20 7h11v11H20zM5 22h11v11H5zM20 22h11v11H20z" /></Ic>
            <span>Add-ins</span>
          </Big>
        </GroupBody>
        <Foot>Add-ins</Foot>
      </Group>
      <Collapse aria-label="Collapse ribbon"><Chev w={12} s={1} /></Collapse>
    </Ribbon>
  );
}

function Decimal({ flip }) {
  const zero = (x, y) => <rect x={x} y={y} width="4" height="7.500" rx="2" />;
  return (
    <Ic w={21} h={20} s={1.2}>
      {flip ? <>{zero(10, 1)}{zero(16, 1)}{zero(16, 11)}</> : <>{zero(15, 1)}{zero(10, 11)}{zero(16, 11)}</>}
      <path d={flip ? "M7 8v1.500M13 18v1.500" : "M12 8v1.500M7 18v1.500"} />
      <path stroke={B} strokeWidth="1.600" d={flip ? "M0 15h10M7 11.500l3.500 3.500L7 18.500" : "M11 5H1M4.500 1.500 1 5l3.500 3.500"} />
    </Ic>
  );
}

const Tri = ({ d, w = 10, h = 10 }) => <Ic w={w} h={h} s={1} c="#707070"><path d={d} fill="#707070" strokeLinejoin="round" /></Ic>;

function Bottom() {
  return (
    <>
      <TabBar>
        <Spacer $w={16} />
        <NavArrow aria-label="Previous sheet"><Ic w={8} h={14} c="#999"><path d="M7 1 1 7l6 6" /></Ic></NavArrow>
        <NavArrow aria-label="Next sheet"><Ic w={8} h={14} c="#999"><path d="M1 1l6 6-6 6" /></Ic></NavArrow>
        <Spacer $w={39} />
        <SheetTab><span>Sheet3</span></SheetTab>
        <SheetTab $on><span>Sheet4</span></SheetTab>
        <SheetTab $lead><span>Gold Price</span></SheetTab>
        <SheetTab><span>1990-2021</span></SheetTab>
        <Spacer $w={36} />
        <NavArrow aria-label="New sheet"><Ic w={15} h={15} c="#333"><path d="M7.500 0v15M0 7.500h15" /></Ic></NavArrow>
        <Kebab aria-label="More"><Ic w={4} h={14} s={0}><path d="M0 0h3v3H0zM0 5h3v3H0zM0 10h3v3H0z" fill="#333" /></Ic></Kebab>
        <HScroll><Tri d="M8.500 1v8L1 5z" /><i /><Tri d="M1.500 1v8L9 5z" /></HScroll>
      </TabBar>
      <StatusBar>
        Ready
        <Access>
          <Ic w={18} h={18} c="#333"><circle cx="8" cy="3" r="2" /><path d="M1 3q3 3 7 3t7-3M1 3q-1 2 4 4v4L3 17M8 11l-1 6M15 3q1 2-4 4v2M12 11q0-2 2.500-2T17 11t-2.500 3v1M14.500 16.500v1" /></Ic>
          Accessibility: Unavailable
        </Access>
        <Spacer $grow />
        <ViewBtn $on aria-label="Normal view"><Ic w={18} h={18} s={1.5}><path d="M1 1h16v16H1zM1 6.300h16M1 11.700h16M6.300 1v16M11.700 1v16" /></Ic></ViewBtn>
        <ViewBtn aria-label="Page layout view"><Ic w={18} h={18} s={1.5}><path d="M1 1h16v16H1zM4.500 3.500h9v11h-9zM6.500 6.500h5M6.500 9h5M6.500 11.500h5" /></Ic></ViewBtn>
        <ViewBtn aria-label="Page break view"><Ic w={18} h={18} s={1.5}><path d="M1 1h16v16H1zM1 10h11V1M6.500 1v9" /></Ic></ViewBtn>
        <Zoom>
          <button aria-label="Zoom out"><Ic w={10} h={10} c="#333"><path d="M0 5h10" /></Ic></button>
          <input type="range" min="0" max="100" defaultValue="39" aria-label="Zoom level" />
          <button aria-label="Zoom in"><Ic w={10} h={10} c="#333"><path d="M0 5h10M5 0v10" /></Ic></button>
          <output>80%</output>
        </Zoom>
      </StatusBar>
    </>
  );
}

const D = ({ w = 30, h = 30, children }) => <svg width={w} height={h} viewBox={`0 0 ${w} ${h}`} aria-hidden="true">{children}</svg>;
const Grad = ({ id, stops, x2 = 0, y2 = 1 }) => (
  <linearGradient id={id} x1="0" y1="0" x2={x2} y2={y2}>
    {stops.map((c, i) => <stop key={i} offset={i / (stops.length - 1)} stopColor={c} />)}
  </linearGradient>
);

function Tasks() {
  return (
    <TaskBar>
      <Weather>
        <D w={34} h={42}>
          <Grad id="sun" stops={["#f4c33a", "#f0640e"]} x2={1} />
          <circle cx="15" cy="25" r="12" fill="url(#sun)" />
          <circle cx="24" cy="12" r="10" fill="#c42b1c" />
          <text x="24" y="17" fontSize="13" fill="#fff" textAnchor="middle" fontFamily="Open Sans">1</text>
        </D>
        <span>25°C<small>Sunny</small></span>
      </Weather>
      <Dock>
        <DockBtn $w={47} $start aria-label="Start">
          <D><Grad id="win" stops={["#86dcff", "#3fc0fb", "#0a93f5"]} x2={1} /><path d="M0 0h14v14H0zM15 0h14v14H15zM0 15h14v14H0zM15 15h14v14H15z" fill="url(#win)" /></D>
        </DockBtn>
        <TaskSearch>
          <Ic w={18} h={18} c="#222" s={2}><circle cx="7.500" cy="7.500" r="6.200" /><path d="M12 12l5 5.500" /></Ic>
          <input type="search" placeholder="Search" aria-label="Search Windows" />
        </TaskSearch>
        <DockBtn aria-label="Copilot">
          <D>
            <Grad id="c1" stops={["#1976e8", "#27b5c9", "#f0c20a"]} /><Grad id="c2" stops={["#8a63f0", "#f0509b", "#f8a33a"]} />
            <path d="M8 2h10q3 0 4 6h-5q-2 0-3 4l-2 7H4q-4 0-3-6Q3 2 8 2z" fill="url(#c1)" />
            <path d="M20 8h5q4 0 3 5-2 7-6 7H12q3 0 4-5 1-7 4-7z" fill="url(#c2)" />
            <rect x="7" y="20" width="23" height="9" rx="2" fill="#ffc400" />
            <text x="18.500" y="27.500" fontSize="8" fontWeight="800" textAnchor="middle" fill="#222" fontFamily="Open Sans">PRE</text>
          </D>
        </DockBtn>
        <DockBtn aria-label="Task view">
          <D><path d="M0 8h23v20H0z" fill="#5c5c5c" /><path d="M7 0h23v20H7z" fill="#f4f4f4" /><path d="M7 8h16v12H7z" fill="#b5b5b5" /></D>
        </DockBtn>
        <DockBtn aria-label="Chat">
          <D><Grad id="ch" stops={["#8f6bb8", "#5b58c8"]} x2={0.3} /><path d="M15 1a14 14 0 1 1-6 26.500L1 29l1.500-7A14 14 0 0 1 15 1z" fill="url(#ch)" /><rect x="7" y="9" width="12" height="12" rx="2" fill="#fff" /><path d="M20 13l4-3.500v11L20 17z" fill="#fff" /></D>
        </DockBtn>
        <DockBtn aria-label="File Explorer">
          <D><Grad id="fo" stops={["#ffe07a", "#fbb811"]} x2={0.6} /><path d="M0 3q0-1 1-1h8l3 3h18v10H0z" fill="#e0a10a" /><path d="M0 8h11l3-2h16v22H0z" fill="url(#fo)" /><path d="M5 28v-4q0-3 3-3h14q3 0 3 3v4z" fill="#0a78c8" /><path d="M8 24.500h14" stroke="#0b4f8a" /></D>
        </DockBtn>
        <DockBtn aria-label="Edge">
          <D>
            <Grad id="e1" stops={["#2fb4ea", "#35c7a5", "#7fe04a"]} x2={1} y2={0.5} /><Grad id="e2" stops={["#1ba0e6", "#0b5fc0"]} />
            <circle cx="15" cy="15" r="15" fill="url(#e1)" />
            <path d="M0 16C1 8 11 6 15 11c-6 1-6 10 1 14 4 2 8 1 11-2-4 8-14 9-20 5-5-3-7-7-7-12z" fill="url(#e2)" />
            <path d="M11 17c-1 6 6 12 16 6 1-1 1-1 0-2-6 2-11 0-12-5z" fill="#123f86" />
            <path d="M15 11c4 1 4 4 2 7 2 3 9 2 12-1 2-1 1 3-2 4-6 2-12-1-12-6q0-2 0-4z" fill="#212121" />
            <path d="M17 18c2 3 9 3 12-1l1-2c0-6-5-5-12-1z" fill="url(#e1)" />
          </D>
        </DockBtn>
        <DockBtn aria-label="Store">
          <D><path d="M8 6V2h13v4" fill="none" stroke="#22a7e8" strokeWidth="2" /><path d="M0 6h29v19q0 4-4 4H4q-4 0-4-4z" fill="#f2f2f2" /><path d="M9 12h5v5H9z" fill="#f25022" /><path d="M15 12h5v5h-5z" fill="#7fba00" /><path d="M9 18h5v5H9z" fill="#00a4ef" /><path d="M15 18h5v5h-5z" fill="#ffb900" /></D>
        </DockBtn>
        <DockBtn aria-label="myHP">
          <D><rect width="30" height="30" rx="1" fill="#0096d6" /><text x="15" y="19" textAnchor="middle" fill="#fff" fontSize="10" fontStyle="italic" fontFamily="Open Sans">my<tspan fontWeight="700" fontSize="12">hp</tspan></text></D>
        </DockBtn>
        <DockBtn aria-label="Help">
          <D w={40} h={42}><circle cx="19" cy="22" r="14" fill="#0096d6" stroke="#fff" strokeWidth="2" /><path d="M14 18q0-5 5-5t5 4q0 3-4 5-1 1-1 3" fill="none" stroke="#fff" strokeWidth="3.600" /><circle cx="19" cy="30" r="2.400" fill="#fff" /><circle cx="30" cy="11" r="10" fill="#fcc10f" /></D>
        </DockBtn>
        <DockBtn aria-label="YouTube">
          <D><rect y="5" width="30" height="20" rx="4" fill="#f00" /><path d="M12 10.500v9l8-4.500z" fill="#fff" /></D>
        </DockBtn>
        <ActiveApp aria-label="Excel"><ExcelLogo w={29} /></ActiveApp>
      </Dock>
      <Tray>
        <Ic w={16} h={10} c="#fff" s={1.8}><path d="M1 9l7-7 7 7" /></Ic>
        <Spacer $w={3} />
        <D w={21} h={20}><path d="M4 15a4 4 0 0 1 0-8 6 6 0 0 1 11-2q4 1 4 5v5z" fill="#bdbdbd" /><path d="M8 4a6 6 0 0 1 8 2l1 4H9z" fill="#8a8a8a" /><circle cx="15" cy="13" r="6" fill="#5cc5ff" /><path d="M15 9v1.500M15 12v4.500" stroke="#123" strokeWidth="1.600" /></D>
        <TrayText $align="center" $ml={13} $mr={12}>{"ENG\nIN"}</TrayText>
        <Ic w={20} h={16} c="#fff" s={1.6}><path d="M1 6q9-9 18 0M4 9q6-6 12 0M7 12q3-3 6 0" /><circle cx="10" cy="14" r="1.300" fill="#fff" /></Ic>
        <Ic w={20} h={16} c="#fff" s={1.5}><path d="M1 5.500h3L9 1v14l-5-4.500H1zM12 5q2 3 0 6M14.500 3q3.500 5 0 10M17 1q5 7 0 14" /></Ic>
        <Ic w={21} h={18} c="#fff" s={1.5}><rect x="2" y="5" width="15" height="11" rx="2.500" /><path d="M18 8.500h1.500v4H18z" /><path d="M5 8h9v5H5z" fill="#fff" /><path d="M4 0 1 6h2.500L2.500 10 7 4.500H4.500L5.500 0z" fill="#fff" stroke="#212121" strokeWidth=".6" /></Ic>
        <TrayText $align="right" $size={15} $ml={9} $mr={0}>{"15:34\n21-11-2023"}</TrayText>
        <D w={17} h={20}><path d="M8.500 1q6 0 6 7v4l2 4H.5l2-4V8q0-7 6-7zM5.500 17h6q-3 4-6 0z" fill="#8fe4ff" /></D>
      </Tray>
    </TaskBar>
  );
}

export default function App() {
  return (
    <>
      <Global />
      <Screen>
        <Title />
        <Menu />
        <RibbonBar />
        <Workspace>
          <Grid />
          <VScroll>
            <Tri d="M1 9h8L5 1z" />
            <i />
            <Tri d="M1 1h8L5 9z" />
          </VScroll>
        </Workspace>
        <Bottom />
        <Tasks />
      </Screen>
    </>
  );
}
